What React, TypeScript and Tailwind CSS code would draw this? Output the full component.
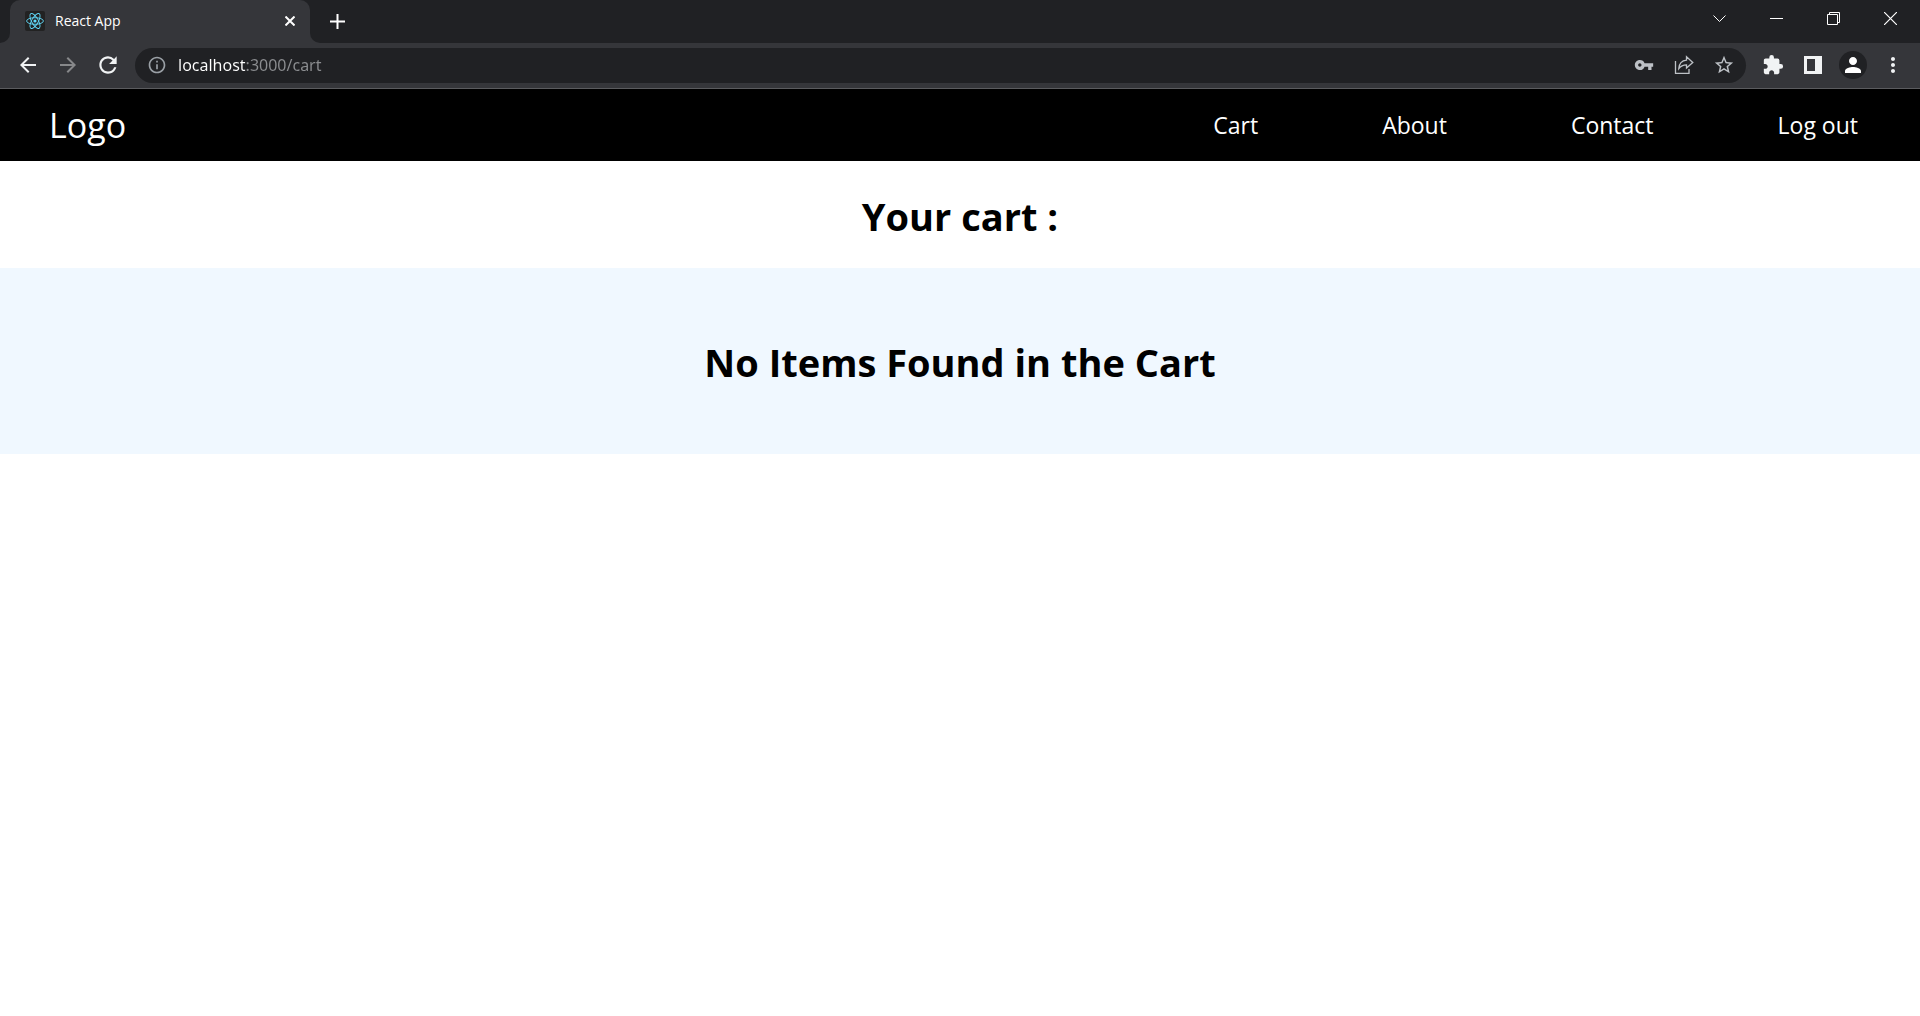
import type { ReactNode } from "react";
import {
  MdArrowBack,
  MdArrowForward,
  MdRefresh,
  MdInfoOutline,
  MdVpnKey,
  MdStarBorder,
  MdExtension,
  MdPerson,
  MdMoreVert,
} from "react-icons/md";

const links = ["Cart", "About", "Contact", "Log out"];

function WindowButton({ label, children }: { label: string; children: ReactNode }) {
  return (
    <button aria-label={label} className="flex h-[37px] w-[57px] items-center justify-center text-white">
      {children}
    </button>
  );
}

function ToolButton({ label, children }: { label: string; children: ReactNode }) {
  return (
    <button aria-label={label} className="flex h-9 w-10 shrink-0 items-center justify-center">
      {children}
    </button>
  );
}

function ReactLogo() {
  return (
    <svg className="size-5 shrink-0 rounded-xs bg-[#222222]" viewBox="0 0 20 20" fill="none" stroke="#61dafb" strokeWidth="0.9">
      <ellipse cx="10" cy="10" rx="8.4" ry="3.3" />
      <ellipse cx="10" cy="10" rx="8.4" ry="3.3" transform="rotate(60 10 10)" />
      <ellipse cx="10" cy="10" rx="8.4" ry="3.3" transform="rotate(120 10 10)" />
      <circle cx="10" cy="10" r="1.6" fill="#61dafb" stroke="none" />
    </svg>
  );
}

function TabStrip() {
  return (
    <div className="flex h-[43px] items-start bg-[#202124] pr-px pl-2.5">
      <div className="relative flex h-full w-[300px] items-center rounded-t-[10px] bg-[#35363a] px-[15px] pb-px">
        <span className="absolute bottom-0 -left-2.5 size-2.5 bg-[#35363a]">
          <span className="block size-full rounded-br-[10px] bg-[#202124]" />
        </span>
        <span className="absolute -right-2.5 bottom-0 size-2.5 bg-[#35363a]">
          <span className="block size-full rounded-bl-[10px] bg-[#202124]" />
        </span>
        <ReactLogo />
        <span className="ml-2.5 flex-1 text-sm text-white">React App</span>
        <button aria-label="Close tab" className="text-white">
          <svg className="size-2.5" viewBox="0 0 10 10" stroke="currentColor" strokeWidth="2">
            <path d="M0.5 0.5l9 9M9.5 0.5l-9 9" />
          </svg>
        </button>
      </div>
      <button aria-label="New tab" className="ml-5 flex h-[43px] w-[15px] items-center text-white">
        <svg className="size-[15px]" viewBox="0 0 15 15" stroke="currentColor" strokeWidth="2">
          <path d="M7.5 0v15M0 7.5h15" />
        </svg>
      </button>
      <div className="ml-auto flex">
        <WindowButton label="Search tabs">
          <svg className="size-[13px]" viewBox="0 0 13 13" fill="none" stroke="currentColor">
            <path d="M0.5 3.5l6 6 6-6" />
          </svg>
        </WindowButton>
        <WindowButton label="Minimize">
          <svg className="size-[13px]" viewBox="0 0 13 13" stroke="currentColor">
            <path d="M0 6.5h13" />
          </svg>
        </WindowButton>
        <WindowButton label="Restore">
          <svg className="size-[13px]" viewBox="0 0 13 13" fill="none" stroke="currentColor">
            <path d="M0.5 2.5h10v10h-10zM2.5 2.5v-2h10v10h-2" />
          </svg>
        </WindowButton>
        <WindowButton label="Close">
          <svg className="size-[13px]" viewBox="0 0 13 13" stroke="currentColor" strokeWidth="1.2">
            <path d="M0 0l13 13M13 0L0 13" />
          </svg>
        </WindowButton>
      </div>
    </div>
  );
}

function Toolbar() {
  return (
    <div className="flex h-[46px] items-center border-b border-[#5b5c5f] bg-[#35363a] pr-[7px] pb-px pl-2 text-[#f1f3f4]">
      <ToolButton label="Back">
        <MdArrowBack size={24} />
      </ToolButton>
      <button aria-label="Forward" disabled className="flex h-9 w-10 shrink-0 items-center justify-center text-[#87888a]">
        <MdArrowForward size={24} />
      </button>
      <ToolButton label="Reload">
        <MdRefresh size={26} />
      </ToolButton>
      <div className="mx-[7px] flex h-[35px] flex-1 items-center rounded-full bg-[#202124] pr-0.5 pl-3 text-[#bdc1c6]">
        <MdInfoOutline size={20} className="shrink-0 text-[#9aa0a6]" />
        <input
          aria-label="Address"
          defaultValue="localhost:3000/cart"
          className="ml-[11px] min-w-0 flex-1 bg-linear-to-r from-white from-[68px] to-[#8b8d90] to-[68px] bg-clip-text font-['Noto_Sans',sans-serif] text-base text-transparent outline-none"
        />
        <ToolButton label="Passwords">
          <MdVpnKey size={20} />
        </ToolButton>
        <ToolButton label="Share">
          <svg className="size-5" viewBox="0 0 20 20" fill="none" stroke="currentColor" strokeWidth="1.3">
            <path d="M1.5 6v12.3h13.5v-4.3" />
            <path d="M4.8 13.600c0.3-5 2.7-8 7.7-8.500V1.8l6.3 5.700-6.300 5.600V9.800c-3.600 0-5.800 1.200-7.700 3.800z" />
          </svg>
        </ToolButton>
        <ToolButton label="Bookmark">
          <MdStarBorder size={22} />
        </ToolButton>
      </div>
      <ToolButton label="Extensions">
        <MdExtension size={22} />
      </ToolButton>
      <ToolButton label="Side panel">
        <svg className="size-[18px]" viewBox="0 0 18 18" fill="currentColor">
          <path fillRule="evenodd" d="M0 0h18v18H0zM3 3v12h8V3z" />
        </svg>
      </ToolButton>
      <ToolButton label="Profile">
        <span className="flex size-7 items-center justify-center rounded-full bg-[#202124] text-white">
          <MdPerson size={24} />
        </span>
      </ToolButton>
      <ToolButton label="Menu">
        <MdMoreVert size={24} />
      </ToolButton>
    </div>
  );
}

export default function App() {
  return (
    <div className="min-h-screen bg-white font-['Open_Sans','Noto_Sans',sans-serif] text-black">
      <TabStrip />
      <Toolbar />
      <header className="flex items-center justify-between bg-black pt-3.5 pb-3.5 pl-[49px] text-white">
        <a href="#home" className="text-[34px] leading-11">
          Logo
        </a>
        <nav>
          <ul className="flex">
            {links.map((link) => (
              <li key={link} className="px-[62px]">
                <a href={`#${link}`} className="text-[23px] leading-8">
                  {link}
                </a>
              </li>
            ))}
          </ul>
        </nav>
      </header>
      <main className="text-center">
        <h1 className="pt-[29px] pb-[26px] text-[38px] leading-[52px] font-bold">Your cart :</h1>
        <section className="bg-[#f0f8ff] pt-[68px] pb-[66px]">
          <h2 className="text-[38px] leading-[52px] font-bold">No Items Found in the Cart</h2>
        </section>
      </main>
    </div>
  );
}
